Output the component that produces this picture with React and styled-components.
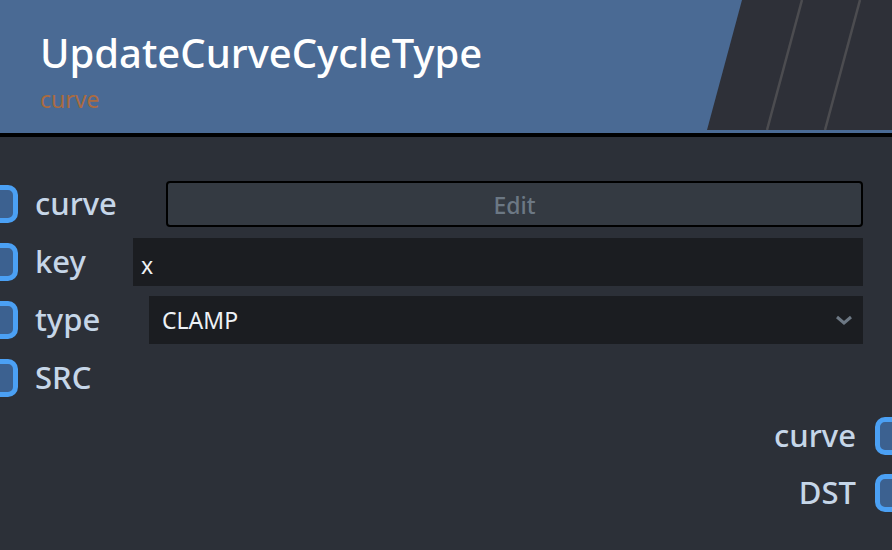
import React from 'react';
import styled, { createGlobalStyle } from 'styled-components';

const GlobalStyle = createGlobalStyle`
  html, body {
    margin: 0;
    padding: 0;
    background: #2c3038;
  }
  body {
    font-family: "Noto Sans", "Open Sans", sans-serif;
  }
`;

const Node = styled.div`
  width: 892px;
  height: 550px;
  overflow: hidden;
  background: #2c3038;
`;

const Header = styled.header`
  position: relative;
  height: 133px;
  background: #4a6a94;
  border-bottom: 4px solid #000;
  padding-left: 40px;
  box-sizing: content-box;
  overflow: hidden;
`;

const Title = styled.h1`
  margin: 0;
  padding-top: 26px;
  font-size: 40px;
  font-weight: 500;
  line-height: 54px;
  color: #ffffff;
`;

const Subtitle = styled.div`
  font-size: 23px;
  line-height: 30px;
  margin-top: 4px;
  color: #ab6b40;
`;

const Stripes = styled.svg`
  position: absolute;
  top: 0;
  right: 0;
  width: 186px;
  height: 130px;
`;

const Body = styled.div`
  padding-top: 38px;
`;

const Row = styled.div`
  display: flex;
  align-items: center;
  height: 58px;
  padding-right: ${p => (p.$out ? 0 : 29)}px;
  justify-content: ${p => (p.$out ? 'flex-end' : 'flex-start')};
`;

const OutRow = styled(Row)`
  height: 57px;
`;

const Socket = styled.div`
  flex: none;
  width: 36px;
  height: 38px;
  box-sizing: border-box;
  border: 5px solid #4ba0f4;
  border-radius: 10px;
  background: #3c6190;
  margin-left: ${p => (p.$out ? '19px' : '-18px')};
  margin-right: ${p => (p.$out ? '-19px' : '17px')};
`;

const Label = styled.span`
  font-size: 31px;
  font-weight: 500;
  color: #c6d6e8;
  line-height: 40px;
  margin-top: -2px;
  width: ${p => p.$w}px;
  flex: none;
`;

const EditButton = styled.button`
  flex: 1;
  height: 46px;
  margin-left: 0;
  background: #343a42;
  border: 2px solid #000;
  border-radius: 4px;
  color: #6c7884;
  font-family: "Noto Sans", sans-serif;
  font-size: 23px;
  font-weight: 500;
  padding: 2px 0 0;
`;

const TextInput = styled.div`
  flex: 1;
  height: 48px;
  background: #1b1d21;
  color: #eef2f6;
  font-size: 23px;
  display: flex;
  align-items: center;
  padding-left: 8px;
  padding-top: 6px;
  box-sizing: border-box;
`;

const Select = styled.div`
  flex: 1;
  height: 48px;
  background: #1b1d21;
  color: #eef2f6;
  font-size: 23px;
  display: flex;
  align-items: center;
  justify-content: space-between;
  padding: 0 10px 0 13px;
  box-sizing: border-box;
`;

const Chevron = () => (
  <svg width="18" height="12" viewBox="0 0 18 12">
    <path d="M2 3 L9 9 L16 3" fill="none" stroke="#6d7884" strokeWidth="3" />
  </svg>
);

export default function App() {
  return (
    <Node>
      <GlobalStyle />
      <Header>
        <Title>UpdateCurveCycleType</Title>
        <Subtitle>curve</Subtitle>
        <Stripes viewBox="0 0 186 130">
          <polygon points="36,0 186,0 186,130 1,130" fill="#2e3038" />
          <line x1="96" y1="0" x2="61" y2="130" stroke="#4c4c50" strokeWidth="2.5" />
          <line x1="154" y1="0" x2="119" y2="130" stroke="#4c4c50" strokeWidth="2.5" />
        </Stripes>
      </Header>
      <Body>
        <Row>
          <Socket />
          <Label $w={131}>curve</Label>
          <EditButton>Edit</EditButton>
        </Row>
        <Row>
          <Socket />
          <Label $w={98}>key</Label>
          <TextInput>x</TextInput>
        </Row>
        <Row>
          <Socket />
          <Label $w={114}>type</Label>
          <Select>
            CLAMP
            <Chevron />
          </Select>
        </Row>
        <Row>
          <Socket />
          <Label>SRC</Label>
        </Row>
        <OutRow $out>
          <Label>curve</Label>
          <Socket $out />
        </OutRow>
        <OutRow $out>
          <Label>DST</Label>
          <Socket $out />
        </OutRow>
      </Body>
    </Node>
  );
}
